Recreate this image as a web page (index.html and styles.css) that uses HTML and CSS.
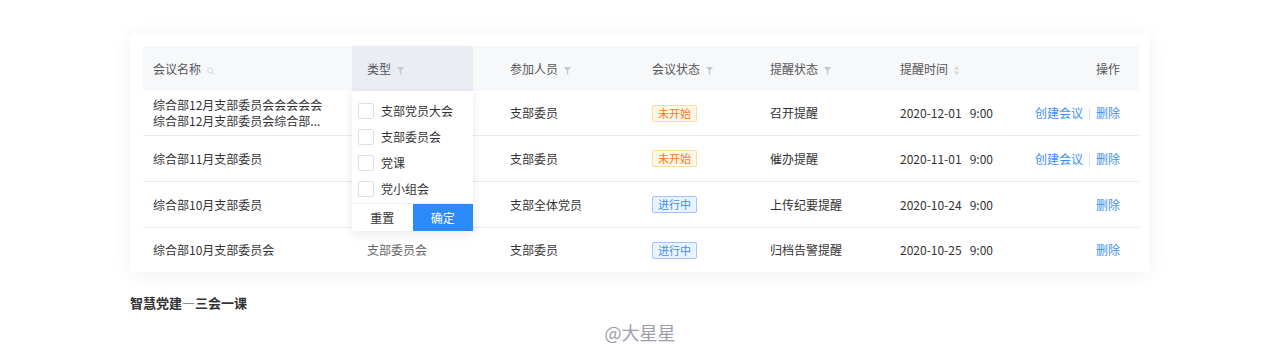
FILE: index.html
```html
<!DOCTYPE html>
<html lang="zh-CN">
<head>
    <meta charset="UTF-8">
    <meta name="viewport" content="width=device-width, initial-scale=1.0">
    <title>智慧党建—三会一课</title>
    <link rel="stylesheet" href="styles.css">
</head>
<body>
    <div class="card">
        <div class="table-wrap">
            <table class="meetings">
                <thead>
                    <tr>
                        <th class="c-name">会议名称
                            <svg class="ico" width="8" height="8" viewBox="0 0 8 8"><circle cx="3.4" cy="3.4" r="2.6" fill="none" stroke="#d4d6dc" stroke-width="1"/><path d="M5.3 5.3L7.5 7.5" stroke="#d4d6dc" stroke-width="1"/></svg>
                        </th>
                        <th class="c-type active">类型
                            <svg class="ico" width="7" height="8" viewBox="0 0 7 8"><path d="M0 0h7L4.2 3.6V8L2.8 7V3.6z" fill="#c5c8d0"/></svg>
                        </th>
                        <th class="c-people">参加人员
                            <svg class="ico" width="7" height="8" viewBox="0 0 7 8"><path d="M0 0h7L4.2 3.6V8L2.8 7V3.6z" fill="#c5c8d0"/></svg>
                        </th>
                        <th class="c-status">会议状态
                            <svg class="ico" width="7" height="8" viewBox="0 0 7 8"><path d="M0 0h7L4.2 3.6V8L2.8 7V3.6z" fill="#c5c8d0"/></svg>
                        </th>
                        <th class="c-remind">提醒状态
                            <svg class="ico" width="7" height="8" viewBox="0 0 7 8"><path d="M0 0h7L4.2 3.6V8L2.8 7V3.6z" fill="#c5c8d0"/></svg>
                        </th>
                        <th class="c-time">提醒时间
                            <svg class="ico" width="5" height="9" viewBox="0 0 5 9"><path d="M2.5 0L5 3.5H0z M2.5 9L0 5.5h5z" fill="#d4d6dc"/></svg>
                        </th>
                        <th class="c-ops">操作</th>
                    </tr>
                </thead>
                <tbody>
                    <tr class="row-first">
                        <td class="c-name two-line">综合部12月支部委员会会会会会<br>综合部12月支部委员会综合部...</td>
                        <td class="c-type"></td>
                        <td class="c-people">支部委员</td>
                        <td class="c-status"><span class="tag tag-wait">未开始</span></td>
                        <td class="c-remind">召开提醒</td>
                        <td class="c-time">2020-12-01&nbsp;&nbsp;&nbsp;9:00</td>
                        <td class="c-ops"><a href="#" class="link">创建会议</a><span class="sep"></span><a href="#" class="link">删除</a></td>
                    </tr>
                    <tr>
                        <td class="c-name">综合部11月支部委员</td>
                        <td class="c-type"></td>
                        <td class="c-people">支部委员</td>
                        <td class="c-status"><span class="tag tag-wait">未开始</span></td>
                        <td class="c-remind">催办提醒</td>
                        <td class="c-time">2020-11-01&nbsp;&nbsp;&nbsp;9:00</td>
                        <td class="c-ops"><a href="#" class="link">创建会议</a><span class="sep"></span><a href="#" class="link">删除</a></td>
                    </tr>
                    <tr>
                        <td class="c-name">综合部10月支部委员</td>
                        <td class="c-type"></td>
                        <td class="c-people">支部全体党员</td>
                        <td class="c-status"><span class="tag tag-run">进行中</span></td>
                        <td class="c-remind">上传纪要提醒</td>
                        <td class="c-time">2020-10-24&nbsp;&nbsp;&nbsp;9:00</td>
                        <td class="c-ops"><a href="#" class="link">删除</a></td>
                    </tr>
                    <tr>
                        <td class="c-name">综合部10月支部委员会</td>
                        <td class="c-type muted">支部委员会</td>
                        <td class="c-people">支部委员</td>
                        <td class="c-status"><span class="tag tag-run">进行中</span></td>
                        <td class="c-remind">归档告警提醒</td>
                        <td class="c-time">2020-10-25&nbsp;&nbsp;&nbsp;9:00</td>
                        <td class="c-ops"><a href="#" class="link">删除</a></td>
                    </tr>
                </tbody>
            </table>

            <!-- filter dropdown for 类型 -->
            <div class="filter-menu">
                <ul class="filter-list">
                    <li><span class="checkbox"></span>支部党员大会</li>
                    <li><span class="checkbox"></span>支部委员会</li>
                    <li><span class="checkbox"></span>党课</li>
                    <li><span class="checkbox"></span>党小组会</li>
                </ul>
                <div class="filter-buttons">
                    <button class="btn-reset">重置</button>
                    <button class="btn-ok">确定</button>
                </div>
            </div>
        </div>
    </div>

    <h2 class="caption">智慧党建—三会一课</h2>
    <div class="watermark">@大星星</div>
</body>
</html>
```

FILE: styles.css
```css
body {
    margin: 0;
    padding: 0;
    background-color: #ffffff;
    font-family: "Noto Sans CJK SC", "Noto Sans", sans-serif;
    color: #333333;
    font-size: 12px;
}

.card {
    margin: 34px 0 0 130px;
    width: 1019px;
    padding: 12px 10px 0 13px;
    box-sizing: border-box;
    background-color: #ffffff;
    box-shadow: 0 2px 18px rgba(40, 50, 80, 0.07);
}

.table-wrap {
    position: relative;
}

.meetings {
    width: 996px;
    border-collapse: collapse;
    table-layout: fixed;
}

.meetings th,
.meetings td {
    box-sizing: border-box;
    padding: 0;
    text-align: left;
    white-space: nowrap;
}

.meetings th {
    height: 45px;
    background-color: #f7f8fa;
    font-weight: normal;
    color: #555555;
}

.meetings th.active {
    background-color: #eaedf4;
}

.meetings td {
    height: 46px;
    border-bottom: 1px solid #e9e9ef;
    color: #333333;
}

.meetings tr.row-first td {
    height: 44px;
}

.meetings tbody tr:last-child td {
    border-bottom: none;
    height: 45px;
}

.meetings td.two-line {
    line-height: 16px;
}

.ico {
    margin-left: 3px;
    vertical-align: -1px;
}

.c-name { width: 209px; padding-left: 10px !important; }
.c-type { width: 121px; padding-left: 15px !important; }
.c-people { width: 169px; padding-left: 37px !important; }
.c-status { width: 118px; padding-left: 10px !important; }
.c-remind { width: 130px; padding-left: 10px !important; }
.c-time { width: 120px; padding-left: 10px !important; }
.meetings .c-ops { text-align: right; padding-right: 19px !important; }

.muted {
    color: #666666 !important;
}

.tag {
    display: inline-block;
    height: 15px;
    line-height: 15px;
    padding: 0 5px;
    font-size: 11px;
    border-radius: 2px;
    border: 1px solid;
}

.tag-wait {
    color: #f5772a;
    background-color: #fff8e6;
    border-color: #fddc9c;
}

.tag-run {
    color: #3a8ef6;
    background-color: #eaf3ff;
    border-color: #9cc6fb;
}

.link {
    color: #3d8ff2;
    text-decoration: none;
}

.sep {
    display: inline-block;
    width: 1px;
    height: 12px;
    margin: 0 6px;
    background-color: #dcdfe6;
    vertical-align: -2px;
}

.filter-menu {
    position: absolute;
    left: 209px;
    top: 45px;
    width: 121px;
    background-color: #ffffff;
    box-shadow: 0 3px 10px rgba(30, 40, 70, 0.10);
}

.filter-list {
    list-style: none;
    margin: 0;
    padding: 7px 0 1px 0;
}

.filter-list li {
    height: 26px;
    line-height: 26px;
    padding-left: 6px;
    display: flex;
    align-items: center;
    color: #333333;
}

.checkbox {
    width: 14px;
    height: 14px;
    border: 1px solid #dcdfe6;
    border-radius: 2px;
    margin-right: 7px;
    background-color: #ffffff;
}

.filter-buttons {
    display: flex;
    height: 27px;
    border-top: 1px solid #f0f0f3;
}

.filter-buttons button {
    flex: 1;
    border: none;
    margin: 0;
    font-family: inherit;
    font-size: 12px;
    cursor: pointer;
}

.btn-reset {
    background-color: #ffffff;
    color: #333333;
}

.btn-ok {
    background-color: #2c8af8;
    color: #ffffff;
}

.caption {
    margin: 22px 0 0 130px;
    font-size: 13px;
    font-weight: bold;
    color: #333333;
    line-height: 18px;
}

.watermark {
    margin-top: 8px;
    text-align: center;
    font-size: 18px;
    color: #9b9da8;
    line-height: 24px;
}
```
